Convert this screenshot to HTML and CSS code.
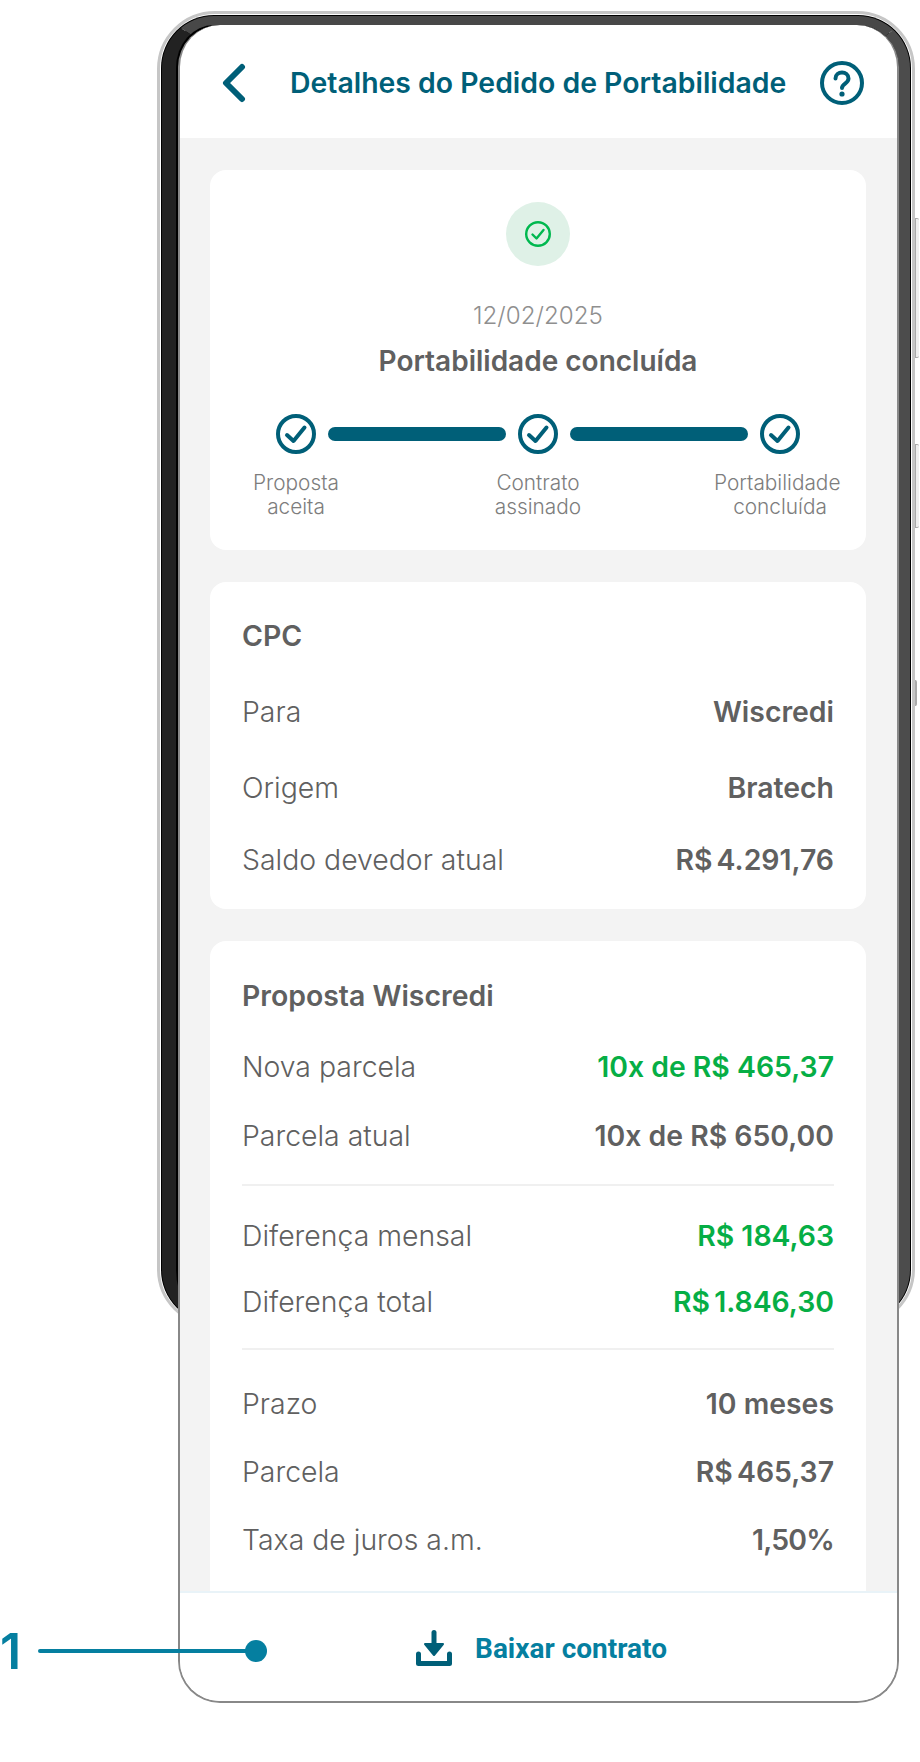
FILE: index.html
```html
<!doctype html>
<html lang="pt-BR">
<head>
  <meta charset="utf-8">
  <title>Detalhes do Pedido de Portabilidade</title>
  <link rel="stylesheet" href="styles.css">
</head>
<body>

<div class="stage">

  <!-- phone body, sits behind the screen -->
  <div class="phone">
    <div class="phone-inner"></div>
    <span class="side-btn side-btn-a"></span>
    <span class="side-btn side-btn-b"></span>
    <span class="side-btn side-btn-c"></span>
  </div>

  <div class="screen">

    <div class="header">
      <svg class="back" width="24" height="40" viewBox="0 0 24 40"><path d="M20 4 L4 20 L20 36" fill="none" stroke="#005f78" stroke-width="6" stroke-linecap="round" stroke-linejoin="round"/></svg>
      <h1>Detalhes do Pedido de Portabilidade</h1>
      <svg class="help" width="44" height="44" viewBox="0 0 44 44">
        <circle cx="22" cy="22" r="20" fill="none" stroke="#005f78" stroke-width="4"/>
        <path d="M15.5 17.5 C15.5 9.5 28.5 9.5 28.5 17.5 C28.5 22.5 22 22.5 22 27" fill="none" stroke="#005f78" stroke-width="4" stroke-linecap="round"/>
        <circle cx="22" cy="33" r="2.6" fill="#005f78"/>
      </svg>
    </div>

    <div class="content">

      <div class="card status">
        <div class="status-badge">
          <svg width="28" height="28" viewBox="0 0 28 28">
            <circle cx="14" cy="14" r="11.8" fill="none" stroke="#00b84f" stroke-width="2.4"/>
            <path d="M8.5 14.5 L12.5 18.5 L19.5 10" fill="none" stroke="#00b84f" stroke-width="2.4" stroke-linecap="round" stroke-linejoin="round"/>
          </svg>
        </div>
        <div class="status-date">12/02/2025</div>
        <div class="status-title">Portabilidade concluída</div>

        <div class="steps">
          <svg class="step-icon" width="40" height="40" viewBox="0 0 40 40"><circle cx="20" cy="20" r="18" fill="none" stroke="#005f78" stroke-width="4"/><path d="M11 21 L17.5 27 L28.5 13.5" fill="none" stroke="#005f78" stroke-width="4" stroke-linecap="round" stroke-linejoin="round"/></svg>
          <span class="step-bar"></span>
          <svg class="step-icon" width="40" height="40" viewBox="0 0 40 40"><circle cx="20" cy="20" r="18" fill="none" stroke="#005f78" stroke-width="4"/><path d="M11 21 L17.5 27 L28.5 13.5" fill="none" stroke="#005f78" stroke-width="4" stroke-linecap="round" stroke-linejoin="round"/></svg>
          <span class="step-bar"></span>
          <svg class="step-icon" width="40" height="40" viewBox="0 0 40 40"><circle cx="20" cy="20" r="18" fill="none" stroke="#005f78" stroke-width="4"/><path d="M11 21 L17.5 27 L28.5 13.5" fill="none" stroke="#005f78" stroke-width="4" stroke-linecap="round" stroke-linejoin="round"/></svg>
        </div>

        <div class="step-labels">
          <div>Proposta<br>aceita</div>
          <div>Contrato<br>assinado</div>
          <div><span class="nudge">Portabilidade</span><br>concluída</div>
        </div>
      </div>

      <div class="card cpc">
        <h2>CPC</h2>
        <div class="row row-para"><span>Para</span><b>Wiscredi</b></div>
        <div class="row row-origem"><span>Origem</span><b>Bratech</b></div>
        <div class="row row-saldo"><span>Saldo devedor atual</span><b class="tight">R$ 4.291,76</b></div>
      </div>

      <div class="card proposal">
        <h2>Proposta Wiscredi</h2>
        <div class="group">
          <div class="row"><span>Nova parcela</span><b class="green">10x de R$ 465,37</b></div>
          <div class="row"><span>Parcela atual</span><b>10x de R$ 650,00</b></div>
        </div>
        <div class="group">
          <div class="row"><span>Diferença mensal</span><b class="green">R$ 184,63</b></div>
          <div class="row"><span>Diferença total</span><b class="green tight">R$ 1.846,30</b></div>
        </div>
        <div class="group">
          <div class="row"><span>Prazo</span><b>10 meses</b></div>
          <div class="row"><span>Parcela</span><b class="tight">R$ 465,37</b></div>
          <div class="row"><span>Taxa de juros a.m.</span><b class="narrow">1,50%</b></div>
        </div>
      </div>

    </div><!-- /.content -->

    <div class="footer">
      <svg width="36" height="36" viewBox="0 0 36 36">
        <path d="M18 2.5 V16" stroke="#005f78" stroke-width="5" stroke-linecap="round" fill="none"/>
        <path d="M9 14 H27 L18 25 Z" fill="#005f78" stroke="#005f78" stroke-width="2" stroke-linejoin="round"/>
        <path d="M2.5 24 V33.5 H33.5 V24" fill="none" stroke="#005f78" stroke-width="5" stroke-linecap="round" stroke-linejoin="round"/>
      </svg>
      <span class="download-label">Baixar contrato</span>
    </div>

  </div><!-- /.screen -->

  <!-- annotation over the screen -->
  <div class="callout">
    <span class="callout-num">1</span>
    <span class="callout-line"></span>
    <span class="callout-dot"></span>
  </div>

</div>

</body>
</html>
```

FILE: styles.css
```css
html {
  box-sizing: border-box;
}
*, *:before, *:after {
  box-sizing: inherit;
}

body {
  margin: 0;
  padding: 0;
  background: #fff;
  font-family: 'Inter', sans-serif;
  color: #606060;
}

.stage {
  position: relative;
  width: 920px;
  height: 1762px;
  overflow: hidden;
  padding: 25px 0 0 178px;
}

/* phone */
.phone {
  position: absolute;
  left: 157px;
  top: 11px;
  width: 758px;
  height: 1316px;
  border: 3px solid #c6c6c6;
  border-radius: 58px;
  background: #fff;
  padding: 2px;
}

.phone-inner {
  width: 100%;
  height: 100%;
  background: #000;
  border-radius: 52px;
  border-top: 9px solid #484848;
  border-left: 14px solid #222;
  border-right: 11px solid #4c4c4c;
  box-shadow: 0 0 0 1px #000, inset 0 0 0 2px #000;
}

.side-btn {
  position: absolute;
  left: 755px;
  width: 4px;
  background: #efefef;
  border: 1px solid #aaa;
  border-right: 0;
  border-radius: 0 2px 2px 0;
}
.side-btn-a { top: 204px; height: 140px; }
.side-btn-b { top: 430px; height: 84px; }
.side-btn-c { top: 666px; height: 26px; background: #aaa; width: 2px; }

/* screen */
.screen {
  position: relative;
  width: 721px;
  height: 1678px;
  background: #fff;
  border-radius: 42px;
  border: 2px solid #888;
  border-top: 0;
  overflow: hidden;
  display: flex;
  flex-direction: column;
}

.header {
  flex: 0 0 113px;
  display: flex;
  align-items: center;
  padding: 2px 33px 0 42px;
}

.header h1 {
  margin: 0 0 0 44px;
  font-size: 28.4px;
  font-weight: 600;
  color: #005f78;
  white-space: nowrap;
}

.back {
  flex: none;
}

.help {
  flex: none;
  margin-left: auto;
}

.content {
  flex: 1;
  min-height: 0;
  background: #f3f3f3;
  padding: 32px 31px 0 30px;
  display: flex;
  flex-direction: column;
  gap: 32px;
  overflow: hidden;
}

.card {
  background: #fff;
  border-radius: 16px;
  padding: 0 32px;
}

/* status card */
.status {
  flex: 0 0 380px;
  padding-top: 32px;
  text-align: center;
}

.status-badge {
  width: 64px;
  height: 64px;
  margin: 0 auto;
  border-radius: 50%;
  background: #dff1e7;
  display: flex;
  align-items: center;
  justify-content: center;
}

.status-date {
  margin-top: 35px;
  font-size: 24.2px;
  line-height: 30px;
  font-weight: 300;
  color: #8f8f8f;
}

.status-title {
  margin-top: 14px;
  font-size: 28px;
  line-height: 32px;
  font-weight: 600;
  color: #606060;
}

.steps {
  margin-top: 37px;
  display: flex;
  align-items: center;
  justify-content: center;
  gap: 12px;
}

.step-bar {
  width: 178px;
  height: 14px;
  border-radius: 7px;
  background: #005f78;
}

.step-labels {
  margin-top: 17px;
  display: grid;
  grid-template-columns: repeat(3, 126px);
  justify-content: center;
  column-gap: 116px;
  font-size: 20.8px;
  line-height: 24px;
  font-weight: 300;
  color: #7d7d7d;
}

.step-labels > div {
  white-space: nowrap;
}

.nudge {
  position: relative;
  left: -3px;
}

/* detail cards */
h2 {
  margin: 0;
  font-size: 28.4px;
  line-height: 32px;
  font-weight: 600;
  color: #606060;
}

.row {
  display: flex;
  justify-content: space-between;
  align-items: center;
  font-size: 28.4px;
  line-height: 32px;
}

.row span {
  font-weight: 300;
  color: #606060;
}

.row b {
  font-weight: 600;
  color: #606060;
}

.row b.green {
  color: #06ae45;
}

.row b.tight {
  word-spacing: -3px;
}

.row b.narrow {
  letter-spacing: -0.8px;
}

.cpc {
  flex: 0 0 327px;
  padding-top: 38px;
}
.row-para { margin-top: 44px; }
.row-origem { margin-top: 44px; }
.row-saldo { margin-top: 40px; }

.proposal {
  flex: 0 0 auto;
  padding-top: 39px;
  height: 700px;
}

.group {
  display: flex;
  flex-direction: column;
  gap: 37px;
  padding: 39px 0 32px;
  border-bottom: 2px solid #f0f0f0;
}

.group:nth-of-type(2) {
  gap: 34px;
  padding: 34px 0 30px;
}

.group:nth-of-type(3) {
  gap: 36px;
  padding: 38px 0 0;
  border-bottom: 0;
}

/* footer */
.footer {
  flex: 0 0 110px;
  border-top: 2px solid #e9f3f8;
  display: flex;
  align-items: center;
  justify-content: center;
  gap: 23px;
  background: #fff;
  padding: 2px 0 0 6px;
}

.download-label {
  font-family: 'Roboto', sans-serif;
  font-size: 28px;
  font-weight: 700;
  color: #057fa0;
}

/* callout */
.callout-num {
  position: absolute;
  left: 0;
  top: 1626px;
  font-size: 50px;
  line-height: 50px;
  font-weight: 600;
  color: #057fa0;
}

.callout-line {
  position: absolute;
  left: 38px;
  top: 1649px;
  width: 215px;
  height: 4px;
  border-radius: 2px;
  background: #057fa0;
}

.callout-dot {
  position: absolute;
  left: 245px;
  top: 1640px;
  width: 22px;
  height: 22px;
  border-radius: 50%;
  background: #057fa0;
}
```
